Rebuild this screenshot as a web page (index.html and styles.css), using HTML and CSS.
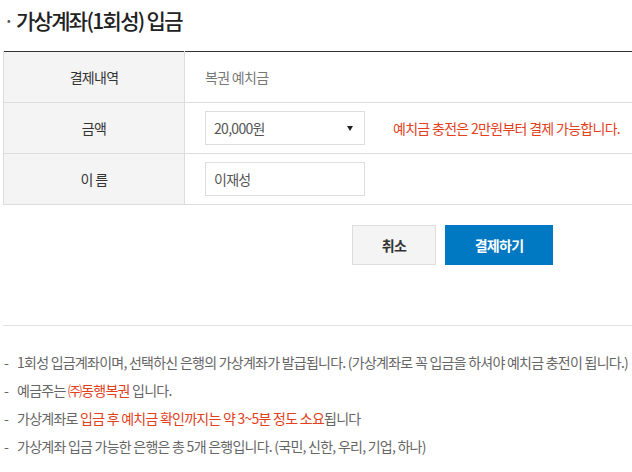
FILE: index.html
```html
<!DOCTYPE html>
<html>
<head>
  <meta charset="utf-8">
  <title>가상계좌(1회성) 입금</title>
  <link rel="stylesheet" href="styles.css">
</head>
<body>
  <div class="wrap">
    <h2 class="title"><span class="dot">·</span>가상계좌(1회성) 입금</h2>

    <table class="pay-table">
      <tr>
        <th>결제내역</th>
        <td class="muted">복권 예치금</td>
      </tr>
      <tr>
        <th>금액</th>
        <td>
          <div class="amount-row">
            <div class="select-box">
              <span>20,000원</span>
              <span class="arrow"></span>
            </div>
            <span class="warn">예치금 충전은 2만원부터 결제 가능합니다.</span>
          </div>
        </td>
      </tr>
      <tr>
        <th>이 름</th>
        <td>
          <div class="input-box">이재성</div>
        </td>
      </tr>
    </table>

    <div class="buttons">
      <button type="button" class="btn btn-cancel">취소</button>
      <button type="button" class="btn btn-pay">결제하기</button>
    </div>

    <ul class="notes">
      <li>1회성 입금계좌이며, 선택하신 은행의 가상계좌가 발급됩니다. (가상계좌로 꼭 입금을 하셔야 예치금 충전이 됩니다.)</li>
      <li>예금주는 <em>㈜동행복권</em> 입니다.</li>
      <li>가상계좌로 <em>입금 후 예치금 확인까지는 약 3~5분 정도 소요</em>됩니다</li>
      <li>가상계좌 입금 가능한 은행은 총 5개 은행입니다. (국민, 신한, 우리, 기업, 하나)</li>
    </ul>
  </div>
</body>
</html>
```

FILE: styles.css
```css
body {
  margin: 0;
  background-color: #fff;
  font-family: "Noto Sans CJK KR", "Noto Sans", sans-serif;
  color: #333;
}

.wrap {
  padding: 0 0 0 3px;
}

.title {
  margin: 0;
  padding: 6px 0 0 0;
  height: 45px;
  font-size: 21px;
  font-weight: 500;
  letter-spacing: -1.7px;
  color: #222;
  line-height: 28px;
}

.dot {
  display: inline-block;
  width: 13px;
  font-weight: 400;
  color: #555;
}

.pay-table {
  width: 100%;
  border-collapse: collapse;
  border-top: 1px solid #333;
}

.pay-table th,
.pay-table td {
  height: 50px;
  padding: 0;
  border-bottom: 1px solid #ddd;
  font-size: 14px;
  letter-spacing: -0.7px;
}

.pay-table th {
  width: 180px;
  background-color: #f4f4f4;
  border-left: 1px solid #ddd;
  border-right: 1px solid #ddd;
  font-weight: 400;
  color: #333;
  text-align: center;
}

.pay-table td {
  padding-left: 20px;
  text-align: left;
}

.muted {
  color: #777;
}

.amount-row {
  display: flex;
  align-items: center;
}

.select-box,
.input-box {
  box-sizing: border-box;
  width: 160px;
  height: 34px;
  border: 1px solid #ddd;
  padding: 0 11px 0 8px;
  display: flex;
  align-items: center;
  color: #555;
}

.select-box {
  justify-content: space-between;
}

.arrow {
  width: 0;
  height: 0;
  border-left: 3px solid transparent;
  border-right: 3px solid transparent;
  border-top: 5px solid #222;
}

.warn {
  margin-left: 28px;
  color: #e2401d;
}

.buttons {
  display: flex;
  gap: 9px;
  padding: 20px 0 0 349px;
  height: 121px;
  box-sizing: border-box;
  border-bottom: 1px solid #e2e2e2;
}

.btn {
  height: 40px;
  border: 1px solid #ddd;
  font-family: "Noto Sans CJK KR", sans-serif;
  font-size: 14px;
  font-weight: 700;
  letter-spacing: -0.7px;
  cursor: pointer;
}

.btn-cancel {
  width: 84px;
  background-color: #f4f4f4;
  color: #333;
}

.btn-pay {
  width: 108px;
  background-color: #0079c2;
  border-color: #0079c2;
  color: #fff;
}

.notes {
  list-style: none;
  margin: 0;
  padding: 22px 0 0 0;
  font-size: 14px;
  letter-spacing: -0.75px;
  color: #666;
}

.notes li {
  position: relative;
  padding-left: 14px;
  height: 28px;
  line-height: 28px;
}

.notes li::before {
  content: "-";
  position: absolute;
  left: 1px;
  top: 0;
}

.notes em {
  font-style: normal;
  color: #e2401d;
}
```
